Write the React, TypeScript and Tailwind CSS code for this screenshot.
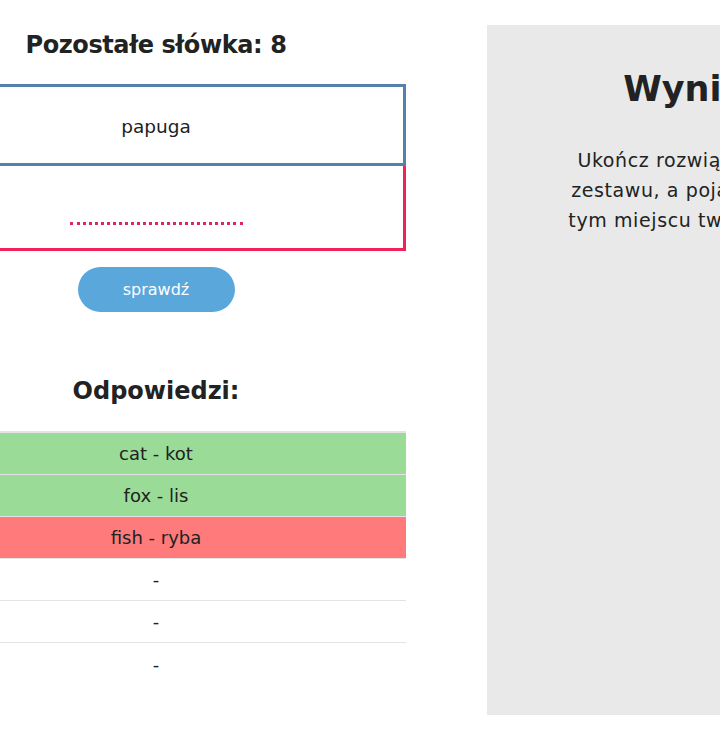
import React from "react";

const font = { fontFamily: '"DejaVu Sans", "Noto Sans", sans-serif' };

export default function App() {
  const rows: { text: string; cls: string }[] = [
    { text: "cat - kot", cls: "bg-[#99db97] border-b" },
    { text: "fox - lis", cls: "bg-[#99db97] border-b" },
    { text: "fish - ryba", cls: "bg-[#ff7b7b] border-b" },
    { text: "-", cls: "bg-white border-b" },
    { text: "-", cls: "bg-white border-b" },
    { text: "-", cls: "bg-white" },
  ];
  return (
    <div className="w-[720px] h-[734px] overflow-hidden bg-white text-[#222]" style={font}>
      <div className="flex items-start">
        <div className="w-[500px] ml-[-94px] shrink-0 flex flex-col items-center">
          <h2 className="mt-[27px] h-[36px] text-[24px] leading-[36px] font-bold tracking-[-0.4px]">
            Pozostałe słówka: 8
          </h2>
          <div className="mt-[21px] w-full h-[82px] border-[3px] border-[#5580aa] flex items-center justify-center text-[18.5px] pt-[3px]">
            papuga
          </div>
          <div className="w-full h-[85px] border-[3px] border-t-0 border-[#ef2357] flex items-end justify-center pb-[23px]">
            <input
              className="w-[173px] h-[30px] border-0 border-b-[3px] border-dotted border-[#e0245e] bg-transparent outline-none text-center text-[17px]"
              style={font}
            />
          </div>
          <button className="mt-[16px] w-[157px] h-[45px] rounded-full bg-[#5aa7dc] text-white text-[16px]" style={font}>
            sprawdź
          </button>
          <h2 className="mt-[61px] h-[36px] text-[24px] leading-[36px] font-bold tracking-[0px]">Odpowiedzi:</h2>
          <div className="mt-[22px] w-full border-t-2 border-[#e3e3e3]">
            {rows.map((r, i) => (
              <div
                key={i}
                className={`h-[42px] flex items-center justify-center text-[18px] border-[#e3e3e3] ${r.cls}`}
              >
                {r.text}
              </div>
            ))}
          </div>
        </div>
        <div className="ml-[81px] mt-[25px] w-[406px] h-[690px] shrink-0 bg-[#e9e9e9] flex flex-col items-center">
          <h1 className="mt-[42px] text-[35px] leading-[44px] font-bold">Wyniki</h1>
          <p className="mt-[34px] text-center text-[19px] leading-[30px] tracking-[0.6px]">
            Ukończ rozwiązywanie
            <br />
            zestawu, a pojawi się w
            <br />
            tym miejscu twój wynik.
          </p>
        </div>
      </div>
    </div>
  );
}
